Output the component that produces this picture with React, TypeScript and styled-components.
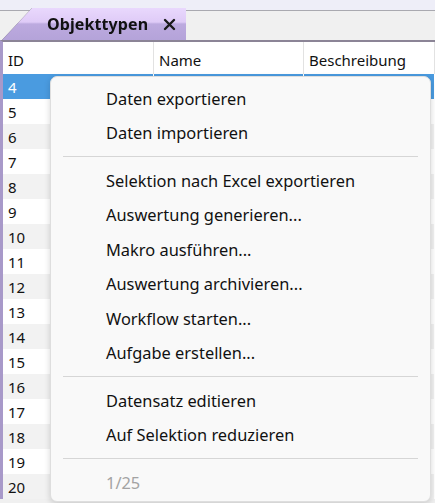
import styled, { createGlobalStyle } from "styled-components";

const GlobalStyle = createGlobalStyle`
  html, body {
    margin: 0;
    padding: 0;
    background: #f0f0f0;
  }
  body {
    font-family: "Noto Sans", "Open Sans", sans-serif;
    overflow: hidden;
  }
`;

const ids = Array.from({ length: 17 }, (_, i) => i + 4);

type MenuEntry = { label: string; muted?: boolean } | "sep";

const menu: MenuEntry[] = [
  { label: "Daten exportieren" },
  { label: "Daten importieren" },
  "sep",
  { label: "Selektion nach Excel exportieren" },
  { label: "Auswertung generieren..." },
  { label: "Makro ausführen..." },
  { label: "Auswertung archivieren..." },
  { label: "Workflow starten..." },
  { label: "Aufgabe erstellen..." },
  "sep",
  { label: "Datensatz editieren" },
  { label: "Auf Selektion reduzieren" },
  "sep",
  { label: "1/25", muted: true },
];

export default function App() {
  return (
    <Page>
      <GlobalStyle />
      <TabStrip>
        <TabOutline>
          <Tab>
            <TabTitle>Objekttypen</TabTitle>
            <svg width="13" height="13" viewBox="0 0 13 13">
              <path
                d="M2 2 L11 11 M11 2 L2 11"
                stroke="#1a1a1a"
                strokeWidth="2.4"
                strokeLinecap="round"
              />
            </svg>
          </Tab>
        </TabOutline>
      </TabStrip>

      <Grid>
        <HeaderRow>
          <HeadCell>ID</HeadCell>
          <HeadCell>Name</HeadCell>
          <HeadCell>Beschreibung</HeadCell>
        </HeaderRow>
        {ids.map((id, i) => (
          <Row key={id} $selected={i === 0} $alt={id % 2 === 0}>
            <Cell>{id}</Cell>
            <Cell />
            <Cell />
          </Row>
        ))}

        <ContextMenu>
          {menu.map((entry, i) =>
            entry === "sep" ? (
              <Separator key={i} />
            ) : (
              <MenuItem key={i} $muted={entry.muted}>
                {entry.label}
              </MenuItem>
            )
          )}
        </ContextMenu>
      </Grid>
    </Page>
  );
}

const Page = styled.div`
  width: 435px;
  height: 503px;
  overflow: hidden;
  background: #f0f0f0;
`;

const TabStrip = styled.div`
  height: 40px;
  display: flex;
  align-items: flex-end;
  padding-left: 2px;
  background: linear-gradient(
    #eeeef8 0,
    #eeeef8 10px,
    #a9a9b0 10px,
    #a9a9b0 11px,
    #f0f0f0 11px
  );
`;

const TabOutline = styled.div`
  filter: drop-shadow(0 0 0.6px #555);
`;

const Tab = styled.div`
  width: 184px;
  height: 32px;
  box-sizing: border-box;
  padding-left: 45px;
  display: flex;
  align-items: center;
  gap: 15px;
  clip-path: polygon(30px 0, 100% 0, 100% 100%, 0 100%);
  background: linear-gradient(
    #e9d8fd 0%,
    #dfcbf7 44%,
    #bcaadf 50%,
    #b4a3d9 100%
  );
`;

const TabTitle = styled.span`
  font-size: 16px;
  font-weight: 700;
  color: #111;
  letter-spacing: 0.1px;
`;

const Grid = styled.div`
  position: relative;
  background: #fff;
  border-top: 2px solid #8b8496;
  border-left: 3px solid #a899c9;
  font-size: 15px;
  color: #111;
`;

const HeaderRow = styled.div`
  display: grid;
  grid-template-columns: 151px 150px 1fr;
  height: 32px;
  background: #fff;
`;

const HeadCell = styled.div`
  display: flex;
  align-items: center;
  padding: 3px 5px 0;
  border-right: 1px solid #e2e2e2;
`;

const Row = styled.div<{ $selected?: boolean; $alt?: boolean }>`
  display: grid;
  grid-template-columns: 151px 150px 1fr;
  height: 25px;
  background: ${(p) => (p.$selected ? "#4a9be0" : p.$alt ? "#f2f2f2" : "#fff")};
  color: ${(p) => (p.$selected ? "#fff" : "#111")};
`;

const Cell = styled.div`
  display: flex;
  align-items: center;
  padding: 0 5px;
  border-right: 1px solid #ffffff;
`;

const ContextMenu = styled.div`
  position: absolute;
  left: 47px;
  top: 34px;
  width: 379px;
  padding: 4px 0 1px;
  background: #f9f9f9;
  border: 1px solid #dedede;
  border-radius: 7px;
  box-shadow: 0 2px 6px rgba(0, 0, 0, 0.16);
`;

const MenuItem = styled.div<{ $muted?: boolean }>`
  height: 34.5px;
  display: flex;
  align-items: center;
  padding-left: 55px;
  font-size: 16.4px;
  color: ${(p) => (p.$muted ? "#a3a3a3" : "#111")};
`;

const Separator = styled.div`
  height: 13px;
  display: flex;
  align-items: center;
  padding: 0 12px;
  &::after {
    content: "";
    flex: 1;
    height: 1px;
    background: #d6d6d6;
  }
`;
